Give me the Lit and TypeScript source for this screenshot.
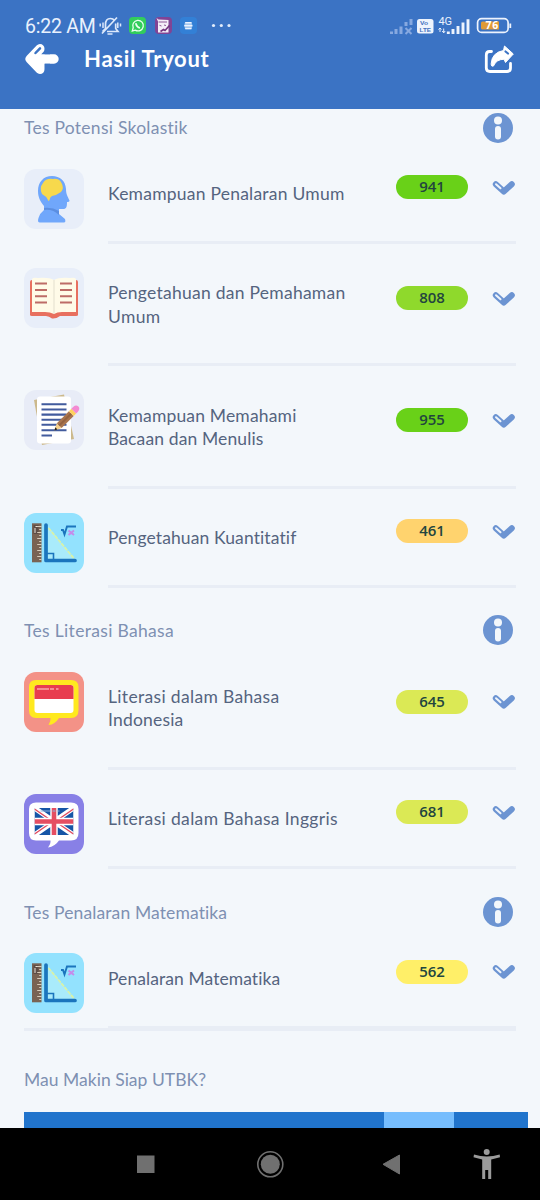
import { LitElement, html, css, svg, TemplateResult } from "lit";
import { customElement, property } from "lit/decorators.js";
import { classMap } from "lit/directives/class-map.js";
import { styleMap } from "lit/directives/style-map.js";

/** A single line of text whose tracking is tuned so that it spans `width` pixels. */
@customElement("fit-label")
class FitLabel extends LitElement {
  static styles = css`
    :host { display: block; white-space: nowrap; }
    .run { display: inline-block; }
  `;
  @property() text = "";
  @property({ type: Number }) width = 0;

  render() {
    return html`<span class="run">${this.text}</span>`;
  }

  updated() {
    const run = this.renderRoot.querySelector(".run") as HTMLElement;
    run.style.letterSpacing = "0px";
    const natural = run.getBoundingClientRect().width;
    run.style.letterSpacing = `${(this.width - natural) / this.text.length}px`;
  }
}

type Line = [string, number];
interface Subject { icon: string; lines: Line[]; score: number; color: string; }
interface Section { title: Line; subjects: Subject[]; }

const SECTIONS: Section[] = [
  {
    title: ["Tes Potensi Skolastik", 164],
    subjects: [
      { icon: "head", lines: [["Kemampuan Penalaran Umum", 236.5]], score: 941, color: "#69d118" },
      { icon: "book", lines: [["Pengetahuan dan Pemahaman", 237.5], ["Umum", 52.5]], score: 808, color: "#8fd92c" },
      { icon: "paper", lines: [["Kemampuan Memahami", 188.5], ["Bacaan dan Menulis", 155.5]], score: 955, color: "#69d118" },
      { icon: "math", lines: [["Pengetahuan Kuantitatif", 189]], score: 461, color: "#ffd36e" },
    ],
  },
  {
    title: ["Tes Literasi Bahasa", 150],
    subjects: [
      { icon: "indonesia", lines: [["Literasi dalam Bahasa", 171.5], ["Indonesia", 75.5]], score: 645, color: "#dbe955" },
      { icon: "english", lines: [["Literasi dalam Bahasa Inggris", 230]], score: 681, color: "#dbe955" },
    ],
  },
  {
    title: ["Tes Penalaran Matematika", 203.5],
    subjects: [
      { icon: "math", lines: [["Penalaran Matematika", 172.5]], score: 562, color: "#ffef68" },
    ],
  },
];

const ticks = Array.from({ length: 12 }, (_, i) => i);

const ICONS: Record<string, TemplateResult> = {
  head: svg`
    <rect width="60" height="60" rx="12" fill="#e8eef9"/>
    <path d="M20 37 C16 32 14 28 14 22 C14 13 19.500 7 28 7 C36 7 41.500 12 42 20 C42 25 43.500 27 45.500 31.500 C45.800 32.500 44 33 43 33 C43 38 42.500 40.500 38 40 H35 V45 L41 50 Q42 53.500 40 53.500 H16 Q13 53.500 14.500 49 Q16 44 20 41 Z" fill="#70a7fb"/>
    <path d="M20 39 Q28 38 35 42 V46 Q29 40 20 41 Z" fill="#5b8ee0"/>
    <path d="M24 31 Q22 27 18 25 Q15 19 19 14 Q22 9 29 10 Q35 9 37.500 14 Q40.500 19 37 23 Q33 26 28 27 Q26 28 25.500 31 Q24.500 33 24 31Z" fill="#f7d94c"/>`,
  book: svg`
    <rect width="60" height="60" rx="12" fill="#e8eef9"/>
    <path d="M6 14 Q6 12 8 12 H52 Q54 12 54 14 V47 Q54 48 52 48 H36 Q32 51 28 50.500 Q25 48 22 48 H8 Q6 48 6 47 Z" fill="#e8705f"/>
    <path d="M8 11 Q9 9 14 10 Q25 9 30 12 Q35 9 46 10 Q51 9 52 11 V44 H38 Q33 44 30 46 Q26 44 21 44 H8 Z" fill="#fffbe8"/>
    <path d="M30 12 V46" stroke="#e3dfce" stroke-width="1"/>
    <path d="M11 15.500H23M11 22H23M11 28.300H23M11 34.500H23M36 15.500H48M36 22H48M36 28.300H48M36 34.500H48" stroke="#bd6c67" stroke-width="2"/>`,
  paper: svg`
    <rect width="60" height="60" rx="12" fill="#e8ecf7"/>
    <path d="M10 10 L40 4.500 L50 49 L18 55 Z" fill="#ccb98c"/>
    <rect x="13" y="6.500" width="34" height="47" rx="3" fill="#fff"/>
    <path d="M17.500 14.300H42.500M17.500 19.500H42.500M17.500 24.600H42.500M17.500 29.700H42.500M17.500 34.800H42.500M17.500 40.200H42.500M17.500 45.500H28" stroke="#425b9d" stroke-width="2.100"/>
    <g transform="translate(30.300 40.500) rotate(-45)">
      <path d="M0 0 L7 -3.400 V3.400Z" fill="#f6d08a"/>
      <path d="M0 0 L3 -1.500 V1.500Z" fill="#222"/>
      <rect x="7" y="-3.400" width="17" height="6.800" fill="#a9754e"/>
      <rect x="7" y="-1" width="17" height="2" fill="#946340"/>
      <rect x="24" y="-3.400" width="3.500" height="6.800" fill="#ffd25e"/>
      <path d="M27.500 -3.400 H30 Q34 -3 34 0 Q34 3 30 3.400 H27.500Z" fill="#f38ad2"/>
    </g>`,
  math: svg`
    <rect width="60" height="60" rx="12" fill="#93e2fe"/>
    <rect x="8" y="10.300" width="9.500" height="39" fill="#796353"/>
    <rect x="9.500" y="12" width="5" height="9" fill="#5e4e46"/>
    <path d="M11.500 13.500 H14 M11 15 V20" stroke="#e9e4da" stroke-width="1"/>
    ${ticks.map((i) => svg`<path d="M${i % 2 ? 15.2 : 13.2} ${13.5 + i * 3} H17.500" stroke="#d8cbb8" stroke-width="1"/>`)}
    <path d="M24 13 L51 47 H24 Z" fill="#a9ebfb"/>
    <path d="M24.500 15 L50.500 46" stroke="#d8f3a8" stroke-width="1.800" stroke-dasharray="4 1"/>
    <path d="M22 12 V47.500 H51" fill="none" stroke="#1b75bd" stroke-width="3.700" stroke-linecap="round" stroke-linejoin="round"/>
    <path d="M23 40.500 H29.500 V47" fill="none" stroke="#1b75bd" stroke-width="1.600"/>
    <path d="M37 17 L39 17 L40.500 21.500 L43 13.500 H52" fill="none" stroke="#1b75bd" stroke-width="1.900"/>
    <path d="M44.500 17.500 L50 22 M50 17.500 L44.500 22" stroke="#c58bea" stroke-width="2"/>`,
  indonesia: svg`
    <rect width="60" height="60" rx="12" fill="#f39287"/>
    <path d="M12 8 H47 Q54.500 8 54.500 15 V38 Q54.500 46 47 46 H35 Q31 52.500 24.500 53 Q27 49 26.500 46 H12 Q5 46 5 38 V15 Q5 8 12 8Z" fill="#ffe91f"/>
    <rect x="10.500" y="13" width="39" height="28" rx="3" fill="#fff"/>
    <path d="M10.500 27 V16 Q10.500 13 13.500 13 H46.500 Q49.500 13 49.500 16 V27Z" fill="#e83d4f"/>
    <path d="M13 17 H25 M26 17 H30 M32 17 H34.500" stroke="#f9a7a8" stroke-width="1.400"/>`,
  english: svg`
    <rect width="60" height="60" rx="12" fill="#8880e6"/>
    <path d="M12 8.500 H47 Q54.500 8.500 54.500 15 V39 Q54.500 46.500 47 46.500 H35 Q31 52.500 24 53.500 Q27 49.500 26.500 46.500 H12 Q5 46.500 5 39 V15 Q5 8.500 12 8.500Z" fill="#fff"/>
    <svg x="10.500" y="14" width="39" height="27" viewBox="0 0 39 27">
      <rect width="39" height="27" fill="#1655a6"/>
      <path d="M0 0 L39 27 M39 0 L0 27" stroke="#fff" stroke-width="5"/>
      <path d="M0 1 L16 12 M23 15 L39 26 M39 1 L23 12 M16 15 L0 26" stroke="#df4c61" stroke-width="1.500"/>
      <path d="M19.500 0 V27 M0 13.500 H39" stroke="#fff" stroke-width="7.500"/>
      <path d="M19.500 0 V27 M0 13.500 H39" stroke="#e54e62" stroke-width="4.600"/>
      <path d="M6 3 H16 M18 3 H21 M23 3 H25" stroke="#8fb5dc" stroke-width="1"/>
    </svg>`,
};

@customElement("subject-row")
class SubjectRow extends LitElement {
  static styles = css`
    :host { display: block; }
    .row { display: grid; grid-template-columns: 84px 288px 72px 1fr; height: 99.200px; }
    .row.tall { height: 122.300px; }
    .icon { width: 60px; height: 60px; display: block; }
    .body { grid-column: 2 / 5; display: grid; grid-template-columns: subgrid; grid-template-rows: 1fr 3px; height: 75.200px; }
    .tall .body { height: 98.300px; }
    .name { padding-top: 13.200px; font-size: 17.500px; line-height: 23.200px; color: #55647f; }
    .score { margin-top: 6.200px; height: 24px; border-radius: 12px; display: flex; align-items: center; justify-content: center;
      font: 600 15px/22px "Open Sans", "Noto Sans", sans-serif; color: #22453f; box-sizing: border-box; padding-bottom: 2px; }
    .tall .score { margin-top: 17.700px; }
    .chevron { width: 24px; height: 18px; margin: 10px 0 0 24px; }
    .tall .chevron { margin-top: 21.500px; }
    .divider { grid-column: 1 / 4; background: #e8edf5; width: 408px; }
  `;
  @property({ attribute: false }) subject!: Subject;

  render() {
    const s = this.subject;
    return html`
      <div class=${classMap({ row: true, tall: s.lines.length > 1 })}>
        <svg class="icon" viewBox="0 0 60 60">${ICONS[s.icon]}</svg>
        <div class="body">
          <div class="name">
            ${s.lines.map(([text, width]) => html`<fit-label .text=${text} .width=${width}></fit-label>`)}
          </div>
          <div class="score" style=${styleMap({ background: s.color })}>${s.score}</div>
          <svg class="chevron" viewBox="0 0 24 18">
            <path d="M3.800 5.200 L11.800 12.500 L19.800 5.200" fill="none" stroke="#6c94d2" stroke-width="6" stroke-linecap="round" stroke-linejoin="round"/>
            <path d="M4 5.200 L8.500 9.300" stroke="#eef4fb" stroke-width="2" stroke-linecap="round"/>
          </svg>
          <div class="divider"></div>
        </div>
      </div>`;
  }
}

@customElement("status-bar")
class StatusBar extends LitElement {
  static styles = css`
    :host { display: flex; align-items: center; height: 22px; padding: 15px 27px 0 25px; color: #e9f1fd;
      font-family: Roboto, sans-serif; }
    .time { font-size: 19.500px; line-height: 22px; width: 74px; padding-top: 1px; }
    .left { width: 134px; height: 22px; flex: none; }
    .right { width: 126px; height: 22px; margin-left: auto; flex: none; }
    .volte { font: 700 5.500px "Liberation Sans", sans-serif; fill: #3f70bd; }
    .net { font: 400 11px Roboto, sans-serif; fill: #e9f1fd; }
    .charge { font: 700 10.500px "Open Sans", sans-serif; fill: #fff; }
  `;

  render() {
    return html`
      <fit-label class="time" .text=${"6:22 AM"} .width=${70.5}></fit-label>
      <svg class="left" viewBox="99 15 134 22">
        <g fill="none" stroke="#dce8fb" stroke-width="1.700">
          <path d="M102.500 31.500 L105.500 28.500 V24.500 Q105.500 18.500 110.500 18.500 Q113 18.500 114.500 20.500 M115.700 23.500 V28.500 L118 31.500 H107 M102 33.500 L117 17.500 M107.500 34 H112.500"/>
          <path d="M103 22.500 V28 M100.200 23.500 V26.500 M117.800 22.500 V28 M120.500 23.500 V26.500" stroke-width="1.500"/>
        </g>
        <rect x="129" y="17" width="17" height="17" rx="4" fill="#32cd5b"/>
        <path d="M132.300 31 L133.200 27.800 A5.300 5.300 0 1 1 135.200 30.100 Z" fill="none" stroke="#e9fff0" stroke-width="1.300"/>
        <path d="M135.700 23.200 Q136.800 27.200 140 28" fill="none" stroke="#e9fff0" stroke-width="1.700"/>
        <rect x="155" y="17" width="17" height="17" rx="4" fill="#814495"/>
        <path d="M156.500 18 L158.500 19.500 L168.500 20 V32.500 H158 V21.500 Z" fill="#f5edf8"/>
        <path d="M158.500 22 H167 M159.500 25.300 L161.500 26 M164 25 L166 25.500" stroke="#74347f" stroke-width="0.800" fill="none"/>
        <path d="M160.500 31.500 L163.500 29.500 L165 30.500 L169.500 25.500" stroke="#74347f" stroke-width="1.700" fill="none"/>
        <rect x="180" y="17" width="17" height="17" rx="4" fill="#3380d6"/>
        <rect x="184.700" y="22" width="7.200" height="7.300" rx="1.200" fill="#8db8e9"/>
        <path d="M185.200 22.700 H191.500 M184.200 25.600 H192.500 M185.200 28.500 H191.500" stroke="#eaf3ff" stroke-width="1.600"/>
        <g fill="#e2ecfb"><circle cx="213.500" cy="25.500" r="1.600"/><circle cx="221.300" cy="25.500" r="1.600"/><circle cx="229" cy="25.500" r="1.600"/></g>
      </svg>
      <svg class="right" viewBox="387 15 126 22">
        <path d="M391.500 34 V31.500 M396 34 V29 M401 34 V26.500 M406 26 V22 M411 25 V19" stroke="#87a9e0" stroke-width="3"/>
        <path d="M405.500 28 L411.500 34 M411.500 28 L405.500 34" stroke="#87a9e0" stroke-width="2"/>
        <rect x="417" y="19" width="16.500" height="14.500" rx="2.500" fill="#eef4fd"/>
        <text class="volte" x="420" y="25" textLength="8" lengthAdjust="spacingAndGlyphs">Vo</text>
        <text class="volte" x="419.500" y="32" textLength="11.500" lengthAdjust="spacingAndGlyphs">LTE</text>
        <text class="net" x="438.500" y="24.800" textLength="13.500">4G</text>
        <path d="M440 28 V32 M438.500 29.500 L440 28 L441.500 29.500 M443.700 28.500 V33 M442.200 31 L443.700 32.800 L445.200 31" fill="none" stroke="#e9f1fd" stroke-width="1"/>
        <path d="M448.300 34 V31.500 M453 34 V29 M458 34 V26 M463 34 V22.500 M468 34 V19.200" stroke="#edf3fd" stroke-width="2.900"/>
        <rect x="477.600" y="18.600" width="30.500" height="13.800" rx="4" fill="none" stroke="#edf3fd" stroke-width="1.700"/>
        <path d="M510.300 23.500 V28" stroke="#edf3fd" stroke-width="1.800"/>
        <path d="M481 23 Q481 21.500 482.500 21.500 H499 V29.500 H482.500 Q481 29.500 481 28Z" fill="#e09a35"/>
        <text class="charge" x="485.500" y="29.200" textLength="12.800">76</text>
      </svg>`;
  }
}

@customElement("app-root")
class AppRoot extends LitElement {
  static styles = css`
    :host { display: flex; flex-direction: column; width: 540px; height: 1200px; overflow: hidden; background: #f3f7fb;
      font-family: Lato, "Open Sans", sans-serif; color: #55647f; }
    .header { height: 109px; background: #3b73c4; flex: none; }
    .bar { display: flex; align-items: center; height: 44px; padding: 0 25px 0 24px; }
    .back { width: 36px; height: 36px; }
    .page-title { margin-left: 24px; font-weight: 700; font-size: 22px; line-height: 30px; color: #fff; }
    .share { width: 32px; height: 32px; margin-left: auto; margin-top: 2px; }
    .content { flex: 1; min-height: 0; overflow: hidden; padding: 0 12px 0 24px; display: flex; flex-direction: column; }
    .section-head { display: flex; justify-content: space-between; align-items: flex-start; height: 60px; padding-right: 14px; }
    .section-title { font-size: 17.500px; line-height: 24px; color: #7e90b2; padding-top: 7.200px; }
    .info { width: 32px; height: 32px; margin-top: 2.500px; }
    .section { flex: none; }
    .section:last-of-type { height: 135px; }
    .end { flex: none; width: 492px; height: 3px; background: #e8edf5; }
    .more { flex: none; font-size: 17.500px; line-height: 24px; color: #7e90b2; margin-top: 37px; }
    .banner { display: grid; grid-template-columns: 360px 70px 1fr; flex: none; height: 16px; margin-top: auto; background: #2174cc; }
    .accent { grid-column: 2; background: #76bdfd; }
    .nav { flex: none; height: 72px; background: #000; }
    .nav-icons { display: block; width: 540px; height: 72px; }
  `;

  render() {
    return html`
      <header class="header">
        <status-bar></status-bar>
        <div class="bar">
          <svg class="back" viewBox="24 41 36 36">
            <path d="M40 48.800 L30.200 59 L40 69.300 L40 59 M32 59 H54" fill="#fff" stroke="#fff" stroke-width="9.400" stroke-linecap="round" stroke-linejoin="round"/>
            <path d="M44.700 45 V54.300 H50 V45Z M44.700 63.700 V73 H50 V63.700Z" fill="#3b73c4"/>
            <path d="M35.500 53 L40 48.300" stroke="#3b73c4" stroke-width="2.500" stroke-linecap="round"/>
          </svg>
          <fit-label class="page-title" .text=${"Hasil Tryout"} .width=${125.5}></fit-label>
          <svg class="share" viewBox="483 44 32 32">
            <path d="M491.500 51.500 H489.500 Q486.300 51.500 486.300 55 V68 Q486.300 71.500 490 71.500 H507 Q510.500 71.500 510.500 68 V63.500" fill="none" stroke="#fff" stroke-width="2.800" stroke-linecap="round"/>
            <path d="M504.500 46 L513.300 54 L505.500 62.500 L504 59.200 Q496 59.500 493.500 66 Q491 67 491.200 63.500 Q492 52.500 503.500 50.500 Z" fill="#fff" stroke="#fff" stroke-width="1" stroke-linejoin="round"/>
            <path d="M505.500 51.500 L508 53.500" stroke="#3b73c4" stroke-width="2.200" stroke-linecap="round"/>
          </svg>
        </div>
      </header>
      <main class="content">
        ${SECTIONS.map((sec) => html`
          <section class="section">
            <div class="section-head">
              <fit-label class="section-title" .text=${sec.title[0]} .width=${sec.title[1]}></fit-label>
              <svg class="info" viewBox="0 0 32 32">
                <circle cx="16" cy="16" r="15" fill="#6c94d2"/>
                <circle cx="16" cy="8.500" r="4" fill="#f3f7fb"/>
                <rect x="13" y="14" width="6" height="13.500" rx="3" fill="#f3f7fb"/>
              </svg>
            </div>
            ${sec.subjects.map((s) => html`<subject-row .subject=${s}></subject-row>`)}
          </section>`)}
        <div class="end"></div>
        <fit-label class="more" .text=${"Mau Makin Siap UTBK?"} .width=${182}></fit-label>
        <div class="banner"><div class="accent"></div></div>
      </main>
      <nav class="nav">
        <svg class="nav-icons" viewBox="0 1128 540 72">
          <rect x="137" y="1155.500" width="17.500" height="17.500" fill="#707070"/>
          <circle cx="270.300" cy="1164.300" r="12.500" fill="none" stroke="#707070" stroke-width="1.600"/>
          <circle cx="270.300" cy="1164.300" r="9.500" fill="#707070"/>
          <path d="M383 1164.300 L399.500 1155 V1174 Z" fill="#707070" stroke="#707070" stroke-width="1" stroke-linejoin="round"/>
          <g fill="#9b9b9b">
            <circle cx="486.700" cy="1152" r="3"/>
            <path d="M474 1154.500 Q486.700 1158.500 499.700 1154.500 L500 1157.300 L491.200 1159.500 V1179 H488.200 V1170 H485.200 V1179 H482.200 V1159.500 L473.500 1157.300Z"/>
          </g>
        </svg>
      </nav>`;
  }
}
